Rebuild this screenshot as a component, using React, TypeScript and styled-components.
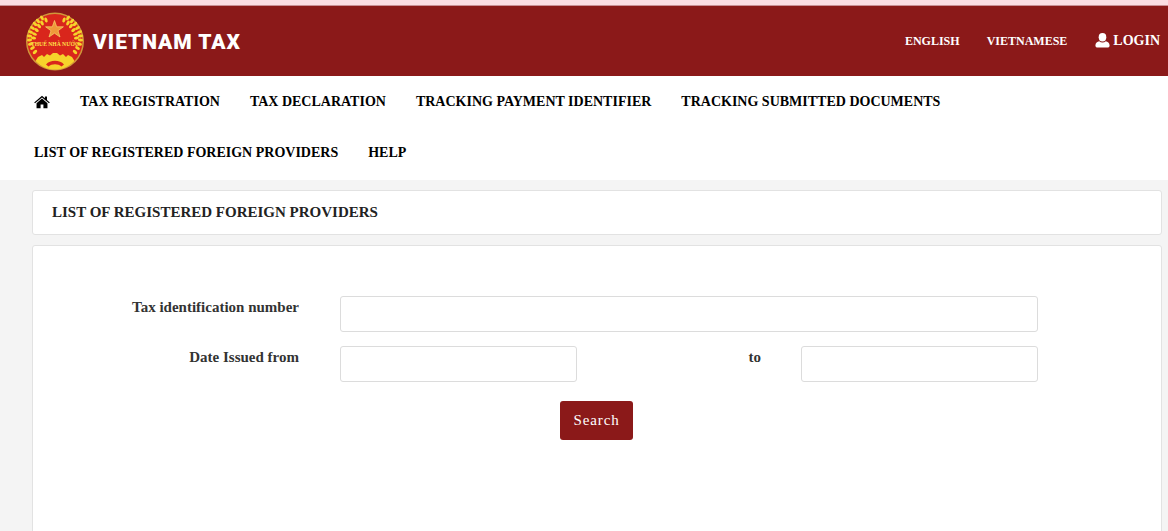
import React from "react";
import styled, { createGlobalStyle } from "styled-components";

const Global = createGlobalStyle`
  html, body { margin: 0; padding: 0; background: #f4f4f4; overflow: hidden; }
  body { font-family: "Liberation Serif", "Times New Roman", serif; }
`;
const Page = styled.div`
  width: 1168px;
  height: 531px;
  overflow: hidden;
  background: #f4f4f4;
`;
const TopStrip = styled.div`
  height: 5px;
  background: #fbdde3;
  border-bottom: 1px solid #c98f95;
`;
const Header = styled.header`
  height: 70px;
  background: #8b1919;
  display: flex;
  align-items: center;
  justify-content: space-between;
  padding: 0 8px 0 25px;
`;
const Brand = styled.div`
  display: flex;
  align-items: center;
  gap: 8px;
`;
const BrandName = styled.span`
  font-family: "Roboto", sans-serif;
  font-weight: 900;
  font-size: 21px;
  letter-spacing: 0.95px;
  line-height: 26px;
  padding-top: 2px;
  color: #fff;
`;
const TopLinks = styled.nav`
  display: flex;
  align-items: center;
  gap: 27px;
  color: #fff;
  font-weight: 700;
`;
const TopLink = styled.a`
  font-size: 12px;
`;
const Login = styled.a`
  display: flex;
  align-items: center;
  gap: 3px;
  margin-left: 1px;
  font-size: 14px;
  svg {
    transform: translateY(-1px);
  }
`;
const Nav = styled.nav`
  background: #fff;
  height: 104px;
  padding: 0 0 0 34px;
  box-sizing: border-box;
`;
const NavRow = styled.div`
  height: 51px;
  display: flex;
  align-items: center;
  gap: 30px;
  font-size: 14px;
  font-weight: 700;
  color: #000;
`;
const Content = styled.main`
  padding: 10px 6px 0 32px;
`;
const Card = styled.section`
  background: #fff;
  border: 1px solid #e2e2e2;
  border-radius: 3px;
`;
const TitleCard = styled(Card)`
  height: 45px;
  box-sizing: border-box;
  padding: 0 19px;
  display: flex;
  align-items: center;
  font-size: 15px;
  font-weight: 700;
  color: #222;
`;
const FormCard = styled(Card)`
  margin-top: 10px;
  height: 320px;
  box-sizing: border-box;
  padding: 50px 0 0 0;
`;
const FormRow = styled.div`
  display: grid;
  grid-template-columns: 266px 278px 184px 277px;
  height: 36px;
  margin-bottom: 14px;
`;
const Label = styled.label`
  font-size: 15px;
  font-weight: 700;
  color: #333;
  text-align: right;
  line-height: 22px;
  white-space: nowrap;
`;
const Field = styled.input<{ $wide?: boolean }>`
  box-sizing: border-box;
  height: 36px;
  width: ${(p) => (p.$wide ? "698px" : "237px")};
  margin-left: 41px;
  border: 1px solid #dcdcdc;
  border-radius: 3px;
  background: #fff;
  outline: none;
`;
const EndField = styled(Field)`
  margin-left: 40px;
`;
const Actions = styled.div`
  display: flex;
  padding-left: 527px;
  margin-top: 19px;
`;
const Search = styled.button`
  width: 73px;
  height: 39px;
  padding: 0;
  border: 0;
  border-radius: 3px;
  background: #8b1919;
  color: #fff;
  font-family: "Liberation Serif", serif;
  font-size: 15px;
  letter-spacing: 0.9px;
`;

const grain = [
  [17, 7, -35], [13, 10, -42], [10, 13, -50], [7.5, 17, -60], [5.5, 21, -72],
  [4.5, 25, -85], [4.5, 29, -95], [5.5, 33, -108], [7.5, 37, -120], [10, 41, -130],
  [21, 9, -20], [17, 12, -30], [14, 15, -40], [11.5, 19, -52], [9.5, 23, -66],
  [8.5, 27, -80],
];

const Emblem = () => (
  <svg width="60" height="60" viewBox="0 0 60 60" aria-hidden="true">
    <circle cx="30" cy="30.5" r="29" fill="#d0973a" />
    <circle cx="30" cy="30.5" r="27.5" fill="#d9261c" />
    <g fill="#f6d32b">
      {grain.map(([x, y, r], i) => (
        <React.Fragment key={i}>
          <ellipse cx={x} cy={y} rx="1.5" ry="2.6" transform={`rotate(${r} ${x} ${y})`} />
          <ellipse cx={60 - x} cy={y} rx="1.5" ry="2.6" transform={`rotate(${-r} ${60 - x} ${y})`} />
        </React.Fragment>
      ))}
    </g>
    <path d="M29.5 9.5 L31.7 15.8 L38.4 15.8 L33 19.7 L35 26 L29.5 22.2 L24 26 L26 19.7 L20.6 15.8 L27.3 15.8 Z" fill="#ef9a3a" stroke="#f7d76a" strokeWidth="0.7" />
    <text x="30" y="34.5" textAnchor="middle" fontFamily="Liberation Serif, serif" fontSize="5.6" fontWeight="700" fill="#ffe04a">THUẾ NHÀ NƯỚC</text>
    <path d="M13 46 L17 44 L19 46 L22 43 L25 44.5 L28 42 L32 42 L35 44.5 L38 43 L41 46 L43 44 L47 46 L49.5 50 C44 56 37 58.6 30 58.6 C23 58.6 16 56 10.5 50 Z" fill="#f6d32b" />
    <path d="M21 53.5 C25 48.5 35 48.5 39 53.5 L36.5 55.5 C33 52.5 27 52.5 23.5 55.5 Z" fill="#d9261c" />
  </svg>
);

const HomeIcon = () => (
  <svg width="16" height="14" viewBox="0 0 17 14" aria-hidden="true">
    <path d="M8.5 0.4 L11.6 3 V1.2 H13.8 V4.9 L16.8 7.4 L15.9 8.4 L8.5 2.3 L1.1 8.4 L0.2 7.4 Z" fill="#000" />
    <path d="M8.5 3.4 L14.3 8.2 V13.6 H10 V9.6 H7 V13.6 H2.7 V8.2 Z" fill="#000" />
  </svg>
);

const UserIcon = () => (
  <svg width="15" height="15" viewBox="0 0 15 15" aria-hidden="true">
    <ellipse cx="7.5" cy="4.2" rx="3.8" ry="4.2" fill="#fff" />
    <path d="M0.4 12.6 C0.4 9.8 2.4 8.6 4.2 8.2 C5.2 9 6.2 9.4 7.5 9.4 C8.8 9.4 9.8 9 10.8 8.2 C12.6 8.6 14.6 9.8 14.6 12.6 C14.6 14 13.6 14.6 12.6 14.6 H2.4 C1.4 14.6 0.4 14 0.4 12.6 Z" fill="#fff" />
  </svg>
);

export default function App() {
  return (
    <Page>
      <Global />
      <TopStrip />
      <Header>
        <Brand>
          <Emblem />
          <BrandName>VIETNAM TAX</BrandName>
        </Brand>
        <TopLinks>
          <TopLink>ENGLISH</TopLink>
          <TopLink>VIETNAMESE</TopLink>
          <Login>
            <UserIcon />
            LOGIN
          </Login>
        </TopLinks>
      </Header>
      <Nav>
        <NavRow>
          <HomeIcon />
          <span>TAX REGISTRATION</span>
          <span>TAX DECLARATION</span>
          <span>TRACKING PAYMENT IDENTIFIER</span>
          <span>TRACKING SUBMITTED DOCUMENTS</span>
        </NavRow>
        <NavRow>
          <span>LIST OF REGISTERED FOREIGN PROVIDERS</span>
          <span>HELP</span>
        </NavRow>
      </Nav>
      <Content>
        <TitleCard>LIST OF REGISTERED FOREIGN PROVIDERS</TitleCard>
        <FormCard>
          <FormRow>
            <Label>Tax identification number</Label>
            <Field $wide />
          </FormRow>
          <FormRow>
            <Label>Date Issued from</Label>
            <Field />
            <Label>to</Label>
            <EndField />
          </FormRow>
          <Actions>
            <Search>Search</Search>
          </Actions>
        </FormCard>
      </Content>
    </Page>
  );
}
